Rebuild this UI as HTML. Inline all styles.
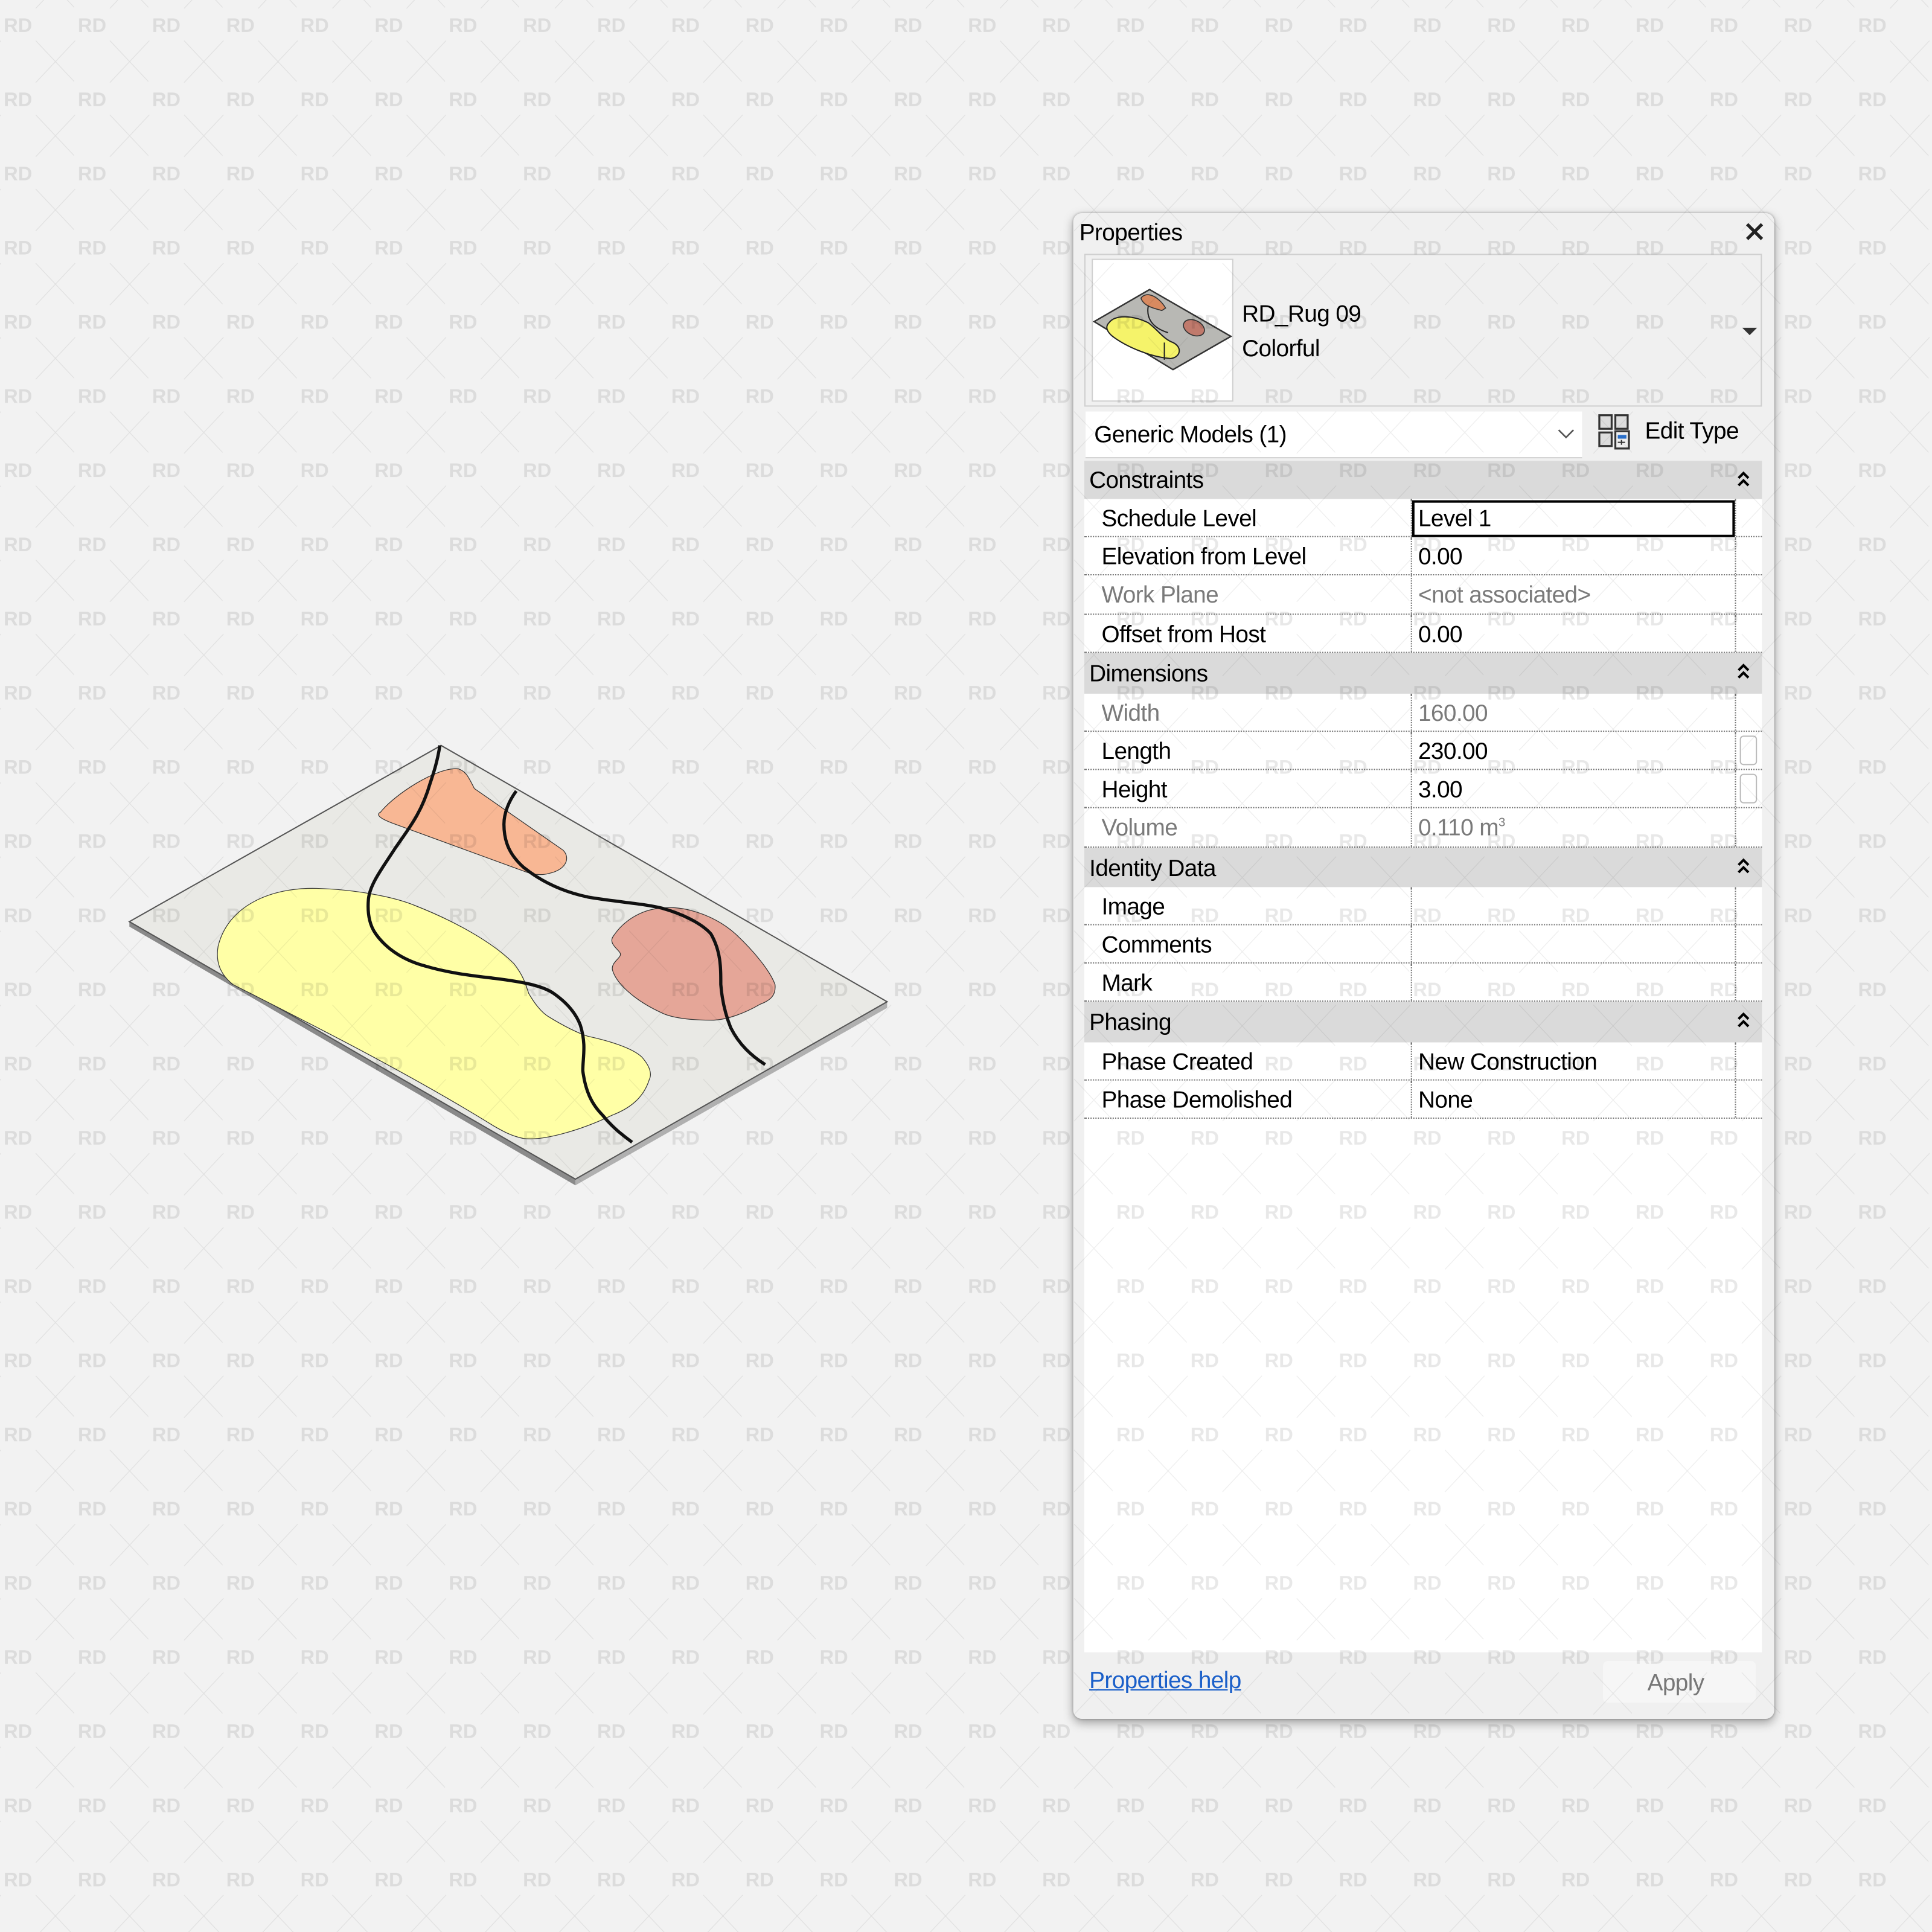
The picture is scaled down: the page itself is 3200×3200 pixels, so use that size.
<!DOCTYPE html>
<html><head><meta charset="utf-8"><style>
html,body{margin:0;padding:0;width:3200px;height:3200px;overflow:hidden;background:#f2f2f2}
#s{position:absolute;left:0;top:0;width:1568px;height:1568px;transform:scale(2.040816);transform-origin:0 0;font-family:"Liberation Sans",sans-serif;color:#000}
.a{position:absolute}
.panel{left:871px;top:173px;width:569px;height:1222px;background:#f0f0f0;border-radius:7px;box-shadow:0 3px 8px rgba(0,0,0,.35),0 0 2px rgba(0,0,0,.3)}
.t{font-size:19px;white-space:nowrap;letter-spacing:-0.3px}
.hdr{left:880px;width:550px;background:#dadada}
.row{left:880px;width:550px;background:#fff;border-bottom:1px dotted #777}
.row .l{position:absolute;left:14px;top:6px}
.row .v{position:absolute;left:271px;top:6px}
.row .c1{position:absolute;left:265px;top:0;bottom:0;border-left:1px dotted #777}
.row .c2{position:absolute;left:528px;top:0;bottom:0;border-left:1px dotted #777}
.g{color:#7a7a7a}
.chev{position:absolute;right:10px;top:8px}
</style></head><body><div id="s">

<svg class="a" style="left:0;top:0" width="1568" height="1568" viewBox="0 0 1568 1568">
<polygon points="105,748 467,957 467,962 105,752" fill="#8a8a8a"/>
<polygon points="467,957 720,813 720,818 467,962" fill="#b0b0b0"/>
<polygon points="358,605 105,748 467,957 720,813" fill="#e9e9e5" stroke="#555" stroke-width="1"/>
<path d="M309,659 C320,645 355,622 372,624 C378,626 380,630 385,640 L457,690 C463,696 460,706 445,709 C438,711 430,709 425,707 L321,669 C307,664 305,661 309,659 Z" fill="#f8b794" stroke="#333" stroke-width="0.6"/>
<path d="M177,768 C185,735 220,720 257,721 C290,722 320,728 337,735 C370,748 400,765 417,782 C425,792 427,800 429,806 C434,815 440,822 445,825 C458,833 468,838 477,841 C500,846 515,852 521,858 C528,866 529,872 527,876 C522,892 510,900 497,905 C470,918 440,926 425,924 C415,922 408,918 401,914 C330,870 250,830 189,799 C178,790 175,780 177,768 Z" fill="#ffffa6" stroke="#333" stroke-width="0.6"/>
<path d="M497,761 C505,748 520,738 537,737 C545,736 552,737 557,738 C575,742 588,750 597,758 C612,772 625,788 629,799 C630,808 625,812 617,815 C605,822 590,828 577,828 C560,828 545,826 537,822 C515,812 500,798 497,787 C496,780 506,777 503,773 C500,769 495,766 497,761 Z" fill="#e5a698" stroke="#333" stroke-width="0.6"/>
<path d="M357,605 C355,618 352,627 349,636 C342,660 332,672 321,688 C310,705 300,718 299,730 C298,742 300,751 305,758 C315,772 330,780 345,784 C365,790 385,792 401,794 C425,797 440,800 449,806 C462,815 468,824 471,832 C476,848 473,858 473,869 C475,885 480,896 489,905 C497,915 505,921 513,927" fill="none" stroke="#111" stroke-width="2.6"/>
<path d="M419,642 C413,650 409,660 409,669 C409,685 415,695 425,704 C440,716 458,724 477,728 C500,732 520,733 537,737 C555,742 570,750 577,758 C585,772 585,785 585,799 C586,812 589,824 593,834 C600,848 610,857 621,864" fill="none" stroke="#111" stroke-width="2.6"/>
</svg>

<div class="a panel"></div>
<div class="a t" style="left:876px;top:179px">Properties</div>
<svg class="a" style="left:1414px;top:178px" width="20" height="20"><path d="M4,4 L16,16 M16,4 L4,16" stroke="#222" stroke-width="2.6"/></svg>

<div class="a" style="left:880px;top:206px;width:548px;height:122px;border:1px solid #cfcfcf;background:#f0f0f0"></div>
<div class="a" style="left:886px;top:210px;width:113px;height:114px;background:#fff;border:1px solid #d0d0d0"></div>
<svg class="a" style="left:886px;top:210px" width="114" height="115" viewBox="886 210 114 115">
<polygon points="888,261 933,235 999,273 952,300" fill="#b8b8b4" stroke="#333" stroke-width="1.2"/>
<path d="M926,242 C930,236 940,240 946,250 L943,252 C935,250 928,248 926,242Z" fill="#d88a60" stroke="#333" stroke-width="0.8"/>
<ellipse cx="969" cy="266" rx="9" ry="6" transform="rotate(25 969 266)" fill="#c07a6c" stroke="#333" stroke-width="0.8"/>
<path d="M900,262 C905,255 920,256 932,262 C940,268 944,275 952,278 C960,282 958,290 950,291 C935,290 915,282 903,273 C898,269 897,265 900,262Z" fill="#f5f36a" stroke="#222" stroke-width="1"/>
<path d="M932,248 C930,258 935,266 948,270 M945,278 L945,292" fill="none" stroke="#222" stroke-width="1"/>
</svg>
<div class="a t" style="left:1008px;top:245px">RD_Rug 09</div>
<div class="a t" style="left:1008px;top:273px">Colorful</div>
<div class="a" style="left:1414px;top:266px;width:0;height:0;border-left:6px solid transparent;border-right:6px solid transparent;border-top:6px solid #333"></div>

<div class="a" style="left:881px;top:334px;width:403px;height:37px;background:#fff;border-bottom:1px solid #d0d0d0"></div>
<div class="a t" style="left:888px;top:343px">Generic Models (1)</div>
<svg class="a" style="left:1263px;top:346px" width="16" height="12"><path d="M2,3 L8,9 L14,3" fill="none" stroke="#555" stroke-width="1.3"/></svg>
<svg class="a" style="left:1297px;top:336px" width="30" height="29"><rect x="1" y="1" width="10" height="11" fill="#ddd" stroke="#333" stroke-width="1.6"/><rect x="14" y="1" width="10" height="11" fill="#ddd" stroke="#333" stroke-width="1.6"/><rect x="1" y="15" width="10" height="11" fill="#ddd" stroke="#333" stroke-width="1.6"/><rect x="14" y="14" width="11" height="14" fill="#eee" stroke="#333" stroke-width="1.6"/><rect x="16" y="17" width="7" height="3" fill="#2a6fc9"/><path d="M16,23 L22,23 M19,21 L19,25" stroke="#333" stroke-width="1"/></svg>
<div class="a t" style="left:1335px;top:340px">Edit Type</div>

<div class="a hdr" style="top:374px;height:31px"><div class="a t" style="left:4px;top:6px">Constraints</div><svg class="chev" width="10" height="14"><path d="M1,6 L5,2 L9,6 M1,12 L5,8 L9,12" fill="none" stroke="#000" stroke-width="2"/></svg></div>
<div class="a row" style="top:405px;height:30px"><div class="l t">Schedule Level</div><div class="c1"></div><div class="c2"></div><div class="a" style="left:266px;top:1px;width:258px;height:26px;border:2px solid #000;background:#fff"></div><div class="v t">Level 1</div></div>
<div class="a row" style="top:436px;height:30px"><div class="l t">Elevation from Level</div><div class="c1"></div><div class="c2"></div><div class="v t">0.00</div></div>
<div class="a row" style="top:467px;height:31px"><div class="l t g">Work Plane</div><div class="c1"></div><div class="c2"></div><div class="v t g">&lt;not associated&gt;</div></div>
<div class="a row" style="top:499px;height:30px"><div class="l t">Offset from Host</div><div class="c1"></div><div class="c2"></div><div class="v t">0.00</div></div>

<div class="a hdr" style="top:530px;height:33px"><div class="a t" style="left:4px;top:7px">Dimensions</div><svg class="chev" width="10" height="14"><path d="M1,6 L5,2 L9,6 M1,12 L5,8 L9,12" fill="none" stroke="#000" stroke-width="2"/></svg></div>
<div class="a row" style="top:563px;height:30px"><div class="l t g">Width</div><div class="c1"></div><div class="c2"></div><div class="v t g">160.00</div></div>
<div class="a row" style="top:594px;height:30px"><div class="l t">Length</div><div class="c1"></div><div class="c2"></div><div class="v t">230.00</div><div class="a" style="left:532px;top:3px;width:12px;height:22px;border:1px solid #bbb;border-radius:3px"></div></div>
<div class="a row" style="top:625px;height:30px"><div class="l t">Height</div><div class="c1"></div><div class="c2"></div><div class="v t">3.00</div><div class="a" style="left:532px;top:3px;width:12px;height:22px;border:1px solid #bbb;border-radius:3px"></div></div>
<div class="a row" style="top:656px;height:31px"><div class="l t g">Volume</div><div class="c1"></div><div class="c2"></div><div class="v t g">0.110 m<sup style="font-size:10px">3</sup></div></div>

<div class="a hdr" style="top:688px;height:32px"><div class="a t" style="left:4px;top:7px">Identity Data</div><svg class="chev" width="10" height="14"><path d="M1,6 L5,2 L9,6 M1,12 L5,8 L9,12" fill="none" stroke="#000" stroke-width="2"/></svg></div>
<div class="a row" style="top:720px;height:30px"><div class="l t">Image</div><div class="c1"></div><div class="c2"></div></div>
<div class="a row" style="top:751px;height:30px"><div class="l t">Comments</div><div class="c1"></div><div class="c2"></div></div>
<div class="a row" style="top:782px;height:30px"><div class="l t">Mark</div><div class="c1"></div><div class="c2"></div></div>

<div class="a hdr" style="top:813px;height:33px"><div class="a t" style="left:4px;top:7px">Phasing</div><svg class="chev" width="10" height="14"><path d="M1,6 L5,2 L9,6 M1,12 L5,8 L9,12" fill="none" stroke="#000" stroke-width="2"/></svg></div>
<div class="a row" style="top:846px;height:30px"><div class="l t">Phase Created</div><div class="c1"></div><div class="c2"></div><div class="v t">New Construction</div></div>
<div class="a row" style="top:877px;height:30px"><div class="l t">Phase Demolished</div><div class="c1"></div><div class="c2"></div><div class="v t">None</div></div>
<div class="a" style="left:880px;top:908px;width:550px;height:433px;background:#fff"></div>

<div class="a t" style="left:884px;top:1354px;color:#1a5fc9;text-decoration:underline">Properties help</div>
<div class="a" style="left:1301px;top:1348px;width:124px;height:34px;background:#f6f6f6;border-radius:4px"></div>
<div class="a t" style="left:1337px;top:1356px;color:#777">Apply</div>

<svg class="a" style="left:0;top:0" width="1568" height="1568">
<defs><pattern id="p" x="0" y="0" width="60.2" height="60.2" patternUnits="userSpaceOnUse">
<text x="3" y="26" font-family="Liberation Sans,sans-serif" font-weight="bold" font-size="16" fill="rgba(0,0,0,0.09)">RD</text>
<path d="M29,33 L61,67 M61,33 L29,67 M-31.2,33 L0.8,67 M0.8,33 L-31.2,67 M29,-27.2 L61,6.8 M61,-27.2 L29,6.8" stroke="rgba(0,0,0,0.07)" stroke-width="0.6"/>
</pattern></defs>
<rect width="1568" height="1568" fill="url(#p)"/>
</svg>
</div></body></html>
